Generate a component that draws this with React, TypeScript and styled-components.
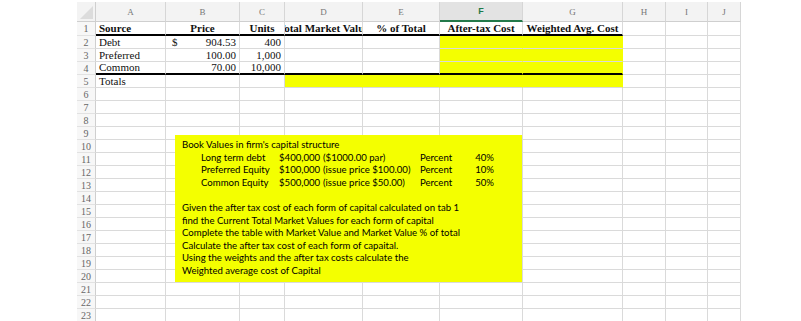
import styled, { createGlobalStyle } from 'styled-components'

const GlobalStyle = createGlobalStyle`
  html, body {
    margin: 0;
    padding: 0;
    background: #ffffff;
  }
`

const YELLOW = '#f4ff00'
const GRID = '#dadada'

const cols = [70, 74, 45, 78, 77, 83, 100, 43, 42, 33]
const letters = ['A', 'B', 'C', 'D', 'E', 'F', 'G', 'H', 'I', 'J']

const Page = styled.div`
  padding: 2px 0 0 77px;
  width: 664px;
  height: 319px;
  overflow: hidden;
  position: relative;
`

const Sheet = styled.div`
  display: grid;
  grid-template-columns: 19px ${cols.map((c) => c + 'px').join(' ')};
  grid-template-rows: 20px 14px repeat(22, 13px);
  font-family: 'Liberation Serif', 'Times New Roman', serif;
  font-size: 11px;
  color: #111;
`

const Corner = styled.div`
  background: #f3f3f3;
  border-right: 1px solid #cfcfcf;
  border-bottom: 1px solid #cfcfcf;
  position: relative;
  &::after {
    content: '';
    position: absolute;
    right: 2px;
    bottom: 2px;
    border-left: 13px solid transparent;
    border-bottom: 13px solid #dcdcdc;
  }
`

const ColHead = styled.div<{ $active?: boolean }>`
  display: flex;
  align-items: center;
  justify-content: center;
  background: ${(p) => (p.$active ? '#e3e3e3' : '#f3f3f3')};
  border-right: 1px solid #d6d6d6;
  border-bottom: ${(p) => (p.$active ? '2px solid #23794a' : '1px solid #cfcfcf')};
  color: ${(p) => (p.$active ? '#1f7a4b' : '#777')};
  font-family: ${(p) =>
    p.$active ? "'Liberation Sans', Arial, sans-serif" : "'Liberation Serif', serif"};
  font-weight: ${(p) => (p.$active ? 700 : 400)};
  font-size: 9px;
`

const RowHead = styled.div`
  display: flex;
  align-items: center;
  justify-content: center;
  background: #f7f7f7;
  border-right: 1px solid #cfcfcf;
  border-bottom: 1px solid #e2e2e2;
  color: #666;
  font-size: 10px;
`

const Cell = styled.div<{
  $align?: 'left' | 'center' | 'right' | 'split'
  $bold?: boolean
  $fill?: boolean
  $thick?: boolean
}>`
  display: flex;
  align-items: center;
  justify-content: ${(p) =>
    p.$align === 'center'
      ? 'center'
      : p.$align === 'right'
      ? 'flex-end'
      : p.$align === 'split'
      ? 'space-between'
      : 'flex-start'};
  padding: 0 3px 0 3px;
  overflow: hidden;
  white-space: nowrap;
  background: ${(p) => (p.$fill ? YELLOW : '#fff')};
  border-right: 1px solid ${(p) => (p.$fill ? YELLOW : GRID)};
  border-bottom: ${(p) => (p.$thick ? '2px solid #000' : `1px solid ${GRID}`)};
  font-weight: ${(p) => (p.$bold ? 700 : 400)};
  line-height: 1;
`

const Dollar = styled.span`
  padding-left: 3px;
`

const TextBox = styled.div`
  position: absolute;
  left: 175px;
  top: 135px;
  width: 347px;
  height: 147px;
  box-sizing: border-box;
  background: ${YELLOW};
  padding: 4px 7px;
  font-family: Lato, 'Noto Sans', sans-serif;
  font-size: 9.6px;
  line-height: 12.6px;
  color: #000;
  white-space: nowrap;
`

const Line = styled.div``

const Blank = styled.div`
  height: 12.6px;
`

const Structure = styled.div`
  display: grid;
  grid-template-columns: 78px 44px 97px 48px 26px;
  margin-left: 19px;
`

const Pct = styled.span`
  text-align: right;
`

type CellSpec = {
  text?: React.ReactNode
  align?: 'left' | 'center' | 'right' | 'split'
  bold?: boolean
}

const rows: CellSpec[][] = [
  [
    { text: 'Source', bold: true },
    { text: 'Price', bold: true, align: 'center' },
    { text: 'Units', bold: true, align: 'center' },
    { text: 'Total Market Value', bold: true, align: 'center' },
    { text: '% of Total', bold: true, align: 'center' },
    { text: 'After-tax Cost', bold: true, align: 'center' },
    { text: 'Weighted Avg. Cost', bold: true, align: 'center' },
  ],
  [
    { text: 'Debt' },
    {
      text: (
        <>
          <Dollar>$</Dollar>
          <span>904.53</span>
        </>
      ),
      align: 'split',
    },
    { text: '400', align: 'right' },
  ],
  [{ text: 'Preferred' }, { text: '100.00', align: 'right' }, { text: '1,000', align: 'right' }],
  [{ text: 'Common' }, { text: '70.00', align: 'right' }, { text: '10,000', align: 'right' }],
  [{ text: 'Totals' }],
]

const isYellow = (r: number, c: number) =>
  (r >= 2 && r <= 4 && (c === 5 || c === 6)) || (r === 5 && c >= 3 && c <= 6)

const isThick = (r: number, c: number) => (r === 1 || r === 4) && c <= 6

const structure = [
  ['Long term debt', '$400,000', '($1000.00 par)', 'Percent', '40%'],
  ['Preferred Equity', '$100,000', '(issue price $100.00)', 'Percent', '10%'],
  ['Common Equity', '$500,000', '(issue price $50.00)', 'Percent', '50%'],
]

const notes = [
  'Given the after tax cost of each form of capital calculated on tab 1',
  'find the Current Total Market Values for each form of capital',
  'Complete the table with Market Value and Market Value % of total',
  'Calculate the after tax cost of each form of capaital.',
  'Using the weights and the after tax costs calculate the',
  'Weighted average cost of Capital',
]

export default function App() {
  const rowNums = Array.from({ length: 23 }, (_, i) => i + 1)
  return (
    <>
      <GlobalStyle />
      <Page>
        <Sheet>
          <Corner />
          {letters.map((l) => (
            <ColHead key={l} $active={l === 'F'}>
              {l}
            </ColHead>
          ))}
          {rowNums.map((r) => (
            <>
              <RowHead key={'h' + r}>{r}</RowHead>
              {cols.map((_, c) => {
                const spec = rows[r - 1]?.[c]
                return (
                  <Cell
                    key={r + '-' + c}
                    $align={spec?.align}
                    $bold={spec?.bold}
                    $fill={isYellow(r, c)}
                    $thick={isThick(r, c)}
                  >
                    {spec?.text}
                  </Cell>
                )
              })}
            </>
          ))}
        </Sheet>
        <TextBox>
          <Line>Book Values in firm's capital structure</Line>
          {structure.map((row) => (
            <Structure key={row[0]}>
              <span>{row[0]}</span>
              <span>{row[1]}</span>
              <span>{row[2]}</span>
              <span>{row[3]}</span>
              <Pct>{row[4]}</Pct>
            </Structure>
          ))}
          <Blank />
          {notes.map((n) => (
            <Line key={n}>{n}</Line>
          ))}
        </TextBox>
      </Page>
    </>
  )
}
